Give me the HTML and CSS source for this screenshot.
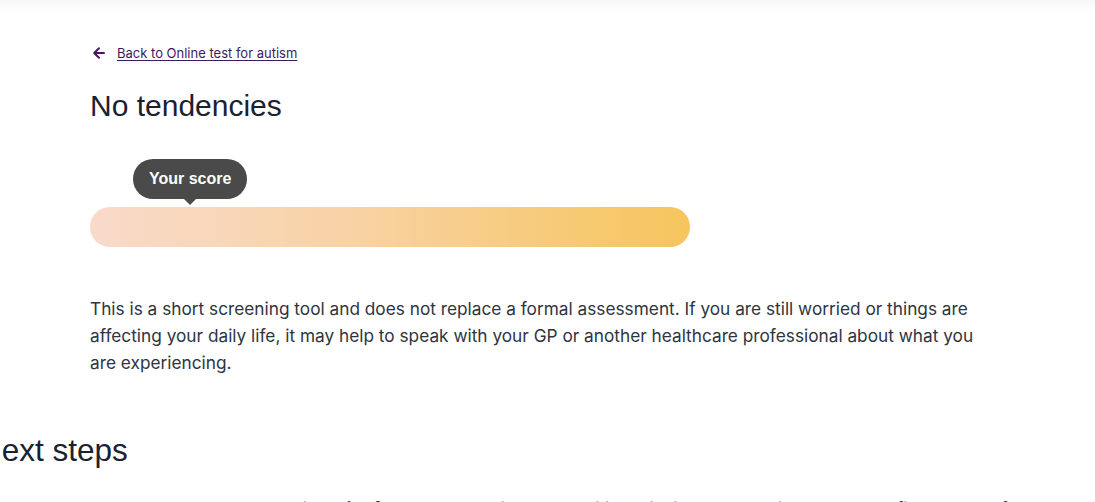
FILE: index.html
```html
<!DOCTYPE html>
<html lang="en">
<head>
<meta charset="utf-8">
<title>No tendencies</title>
<link rel="stylesheet" href="styles.css">
</head>
<body>
<div class="topbar"></div>
<main class="page">
  <a class="back" href="#">
    <svg class="back-icon" width="14" height="14" viewBox="0 0 14 14" aria-hidden="true">
      <path d="M12 7H2.5M7 2.2L2.2 7 7 11.8" fill="none" stroke="#4b1764" stroke-width="2" stroke-linecap="round" stroke-linejoin="round"/>
    </svg>
    <span class="back-text">Back to Online test for autism</span>
  </a>
  <h1 class="title">No tendencies</h1>
  <div class="score">
    <div class="tip-row"><span class="tip">Your score</span></div>
    <div class="bar"></div>
  </div>
  <p class="lead">This is a short screening tool and does not replace a formal assessment. If you are still worried or things are affecting your daily life, it may help to speak with your GP or another healthcare professional about what you are experiencing.</p>
</main>
<section class="next">
  <h2 class="next-title">Next steps</h2>
  <p class="next-text">Learn about ways to practise <strong>mindfulness</strong>, relaxation and positive thinking to help with stress, and find support for your everyday life.</p>
</section>
</body>
</html>
```
FILE: styles.css
```css
html, body {
  margin: 0;
  padding: 0;
  background: #ffffff;
}
body {
  font-family: Inter, "Liberation Sans", Arial, sans-serif;
  color: #1d2433;
  overflow: hidden;
  height: 502px;
}
.topbar {
  height: 12px;
  background: linear-gradient(#f7f7f7, #ffffff);
}
.page {
  padding: 32px 0 0 90px;
  width: 910px;
}
.back {
  display: inline-flex;
  align-items: center;
  gap: 11px;
  color: #3f1a5c;
  font-size: 13px;
  line-height: 16px;
  text-decoration: none;
  margin-left: 2px;
}
.back-icon {
  display: block;
}
.back-text {
  text-decoration: underline;
  text-underline-offset: 2px;
}
.title {
  font-family: "Liberation Sans", Arial, sans-serif;
  font-weight: 400;
  font-size: 30px;
  line-height: 36px;
  margin: 24px 0 0;
  color: #1a2131;
}
.score {
  margin-top: 35px;
  width: 600px;
}
.tip-row {
  padding-left: 43px;
  height: 48px;
}
.tip {
  position: relative;
  display: inline-block;
  background: #4a4a4a;
  color: #ffffff;
  font-family: "Liberation Sans", Arial, sans-serif;
  font-weight: 700;
  font-size: 16px;
  line-height: 40px;
  height: 40px;
  padding: 0 16px;
  border-radius: 20px;
}
.tip::after {
  content: "";
  position: absolute;
  left: 50%;
  bottom: -6px;
  margin-left: -6px;
  border-left: 6px solid transparent;
  border-right: 6px solid transparent;
  border-top: 6px solid #4a4a4a;
}
.bar {
  height: 40px;
  border-radius: 20px;
  background: linear-gradient(90deg, #f9dacb 0%, #f8d3a8 40%, #f6c55c 100%);
}
.lead {
  margin: 48px 0 0;
  font-size: 17.25px;
  line-height: 27px;
  color: #2e3440;
}
.next {
  margin-left: -21px;
  padding-top: 56px;
}
.next-title {
  font-family: "Liberation Sans", Arial, sans-serif;
  font-weight: 400;
  font-size: 31.5px;
  line-height: 36px;
  margin: 0;
  color: #1a2131;
}
.next-text {
  margin: 27px 0 0 111px;
  font-size: 17.25px;
  line-height: 27px;
  color: #2e3440;
}
.next-text strong {
  color: #3f1a5c;
}
```
